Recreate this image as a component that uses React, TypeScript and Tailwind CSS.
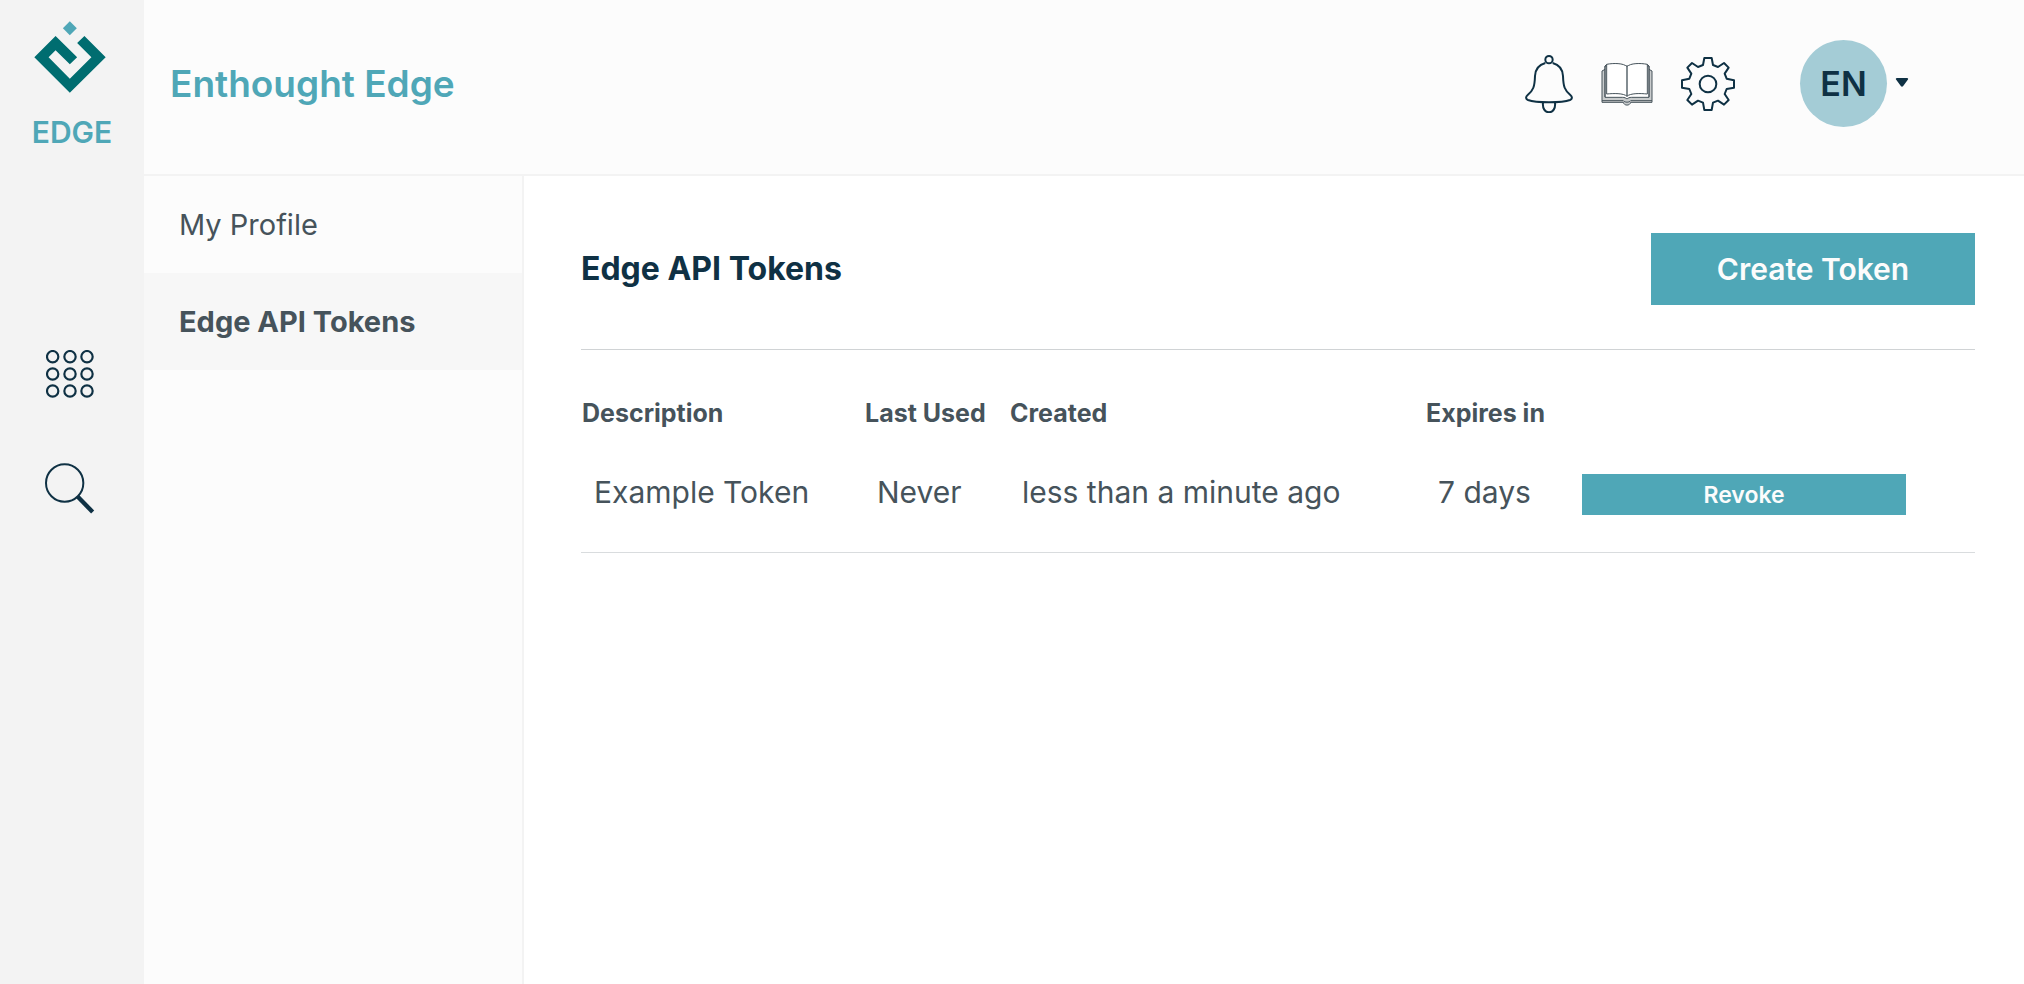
import React from "react";
import { clsx } from "clsx";

interface Token {
  id: string;
  description: string;
  lastUsed: string;
  created: string;
  expiresIn: string;
}

interface NavItem {
  label: string;
  href: string;
}

const NAV_ITEMS: NavItem[] = [
  { label: "My Profile", href: "#profile" },
  { label: "Edge API Tokens", href: "#tokens" },
];

const TOKENS: Token[] = [
  {
    id: "example",
    description: "Example Token",
    lastUsed: "Never",
    created: "less than a minute ago",
    expiresIn: "7 days",
  },
];

const EdgeLogo = () => (
  <svg viewBox="102 62 217 217" className="size-[72px]" aria-hidden="true">
    <path d="M210 63l21 21-21 21-21-21z" fill="#4fa7b7" />
    <path
      d="M167 107l65 64-22 21-43-42-21 21 64 65 65-65-43-43 22-21 64 64-108 107L103 171z"
      fill="#006d70"
    />
  </svg>
);

const AppsIcon = () => (
  <svg
    viewBox="0 0 144 144"
    className="size-12"
    fill="none"
    stroke="#0f3144"
    strokeWidth="6.5"
    aria-hidden="true"
  >
    {[20, 72, 123].map((cy) =>
      [20, 72, 123].map((cx) => (
        <circle key={`${cx}-${cy}`} cx={cx} cy={cy} r="17" />
      ))
    )}
  </svg>
);

const SearchIcon = () => (
  <svg
    viewBox="0 0 150 153"
    className="w-[50px] h-[51px]"
    fill="none"
    stroke="#0f3144"
    aria-hidden="true"
  >
    <circle cx="59" cy="60" r="56" strokeWidth="6" />
    <path d="M97 100l46 47" strokeWidth="13" />
  </svg>
);

const BellIcon = () => (
  <svg
    viewBox="72 74 144 174"
    className="w-12 h-[58px]"
    fill="none"
    stroke="#0f3144"
    strokeWidth="6"
    strokeLinejoin="round"
    aria-hidden="true"
  >
    <circle cx="144" cy="88" r="11" />
    <path d="M133 98c-18 5-30 19-31 39-1 32-5 43-22 57-7 6-6 12 1 15 13 5 36 7 63 7s50-2 63-7c7-3 8-9 1-15-17-14-21-25-22-57-1-20-13-34-31-39" />
    <path d="M126 217c-2 17 6 29 18 29s20-12 18-29" />
  </svg>
);

const BookIcon = () => (
  <svg
    viewBox="305 95 156 132"
    className="w-[52px] h-11"
    fill="none"
    stroke="#46535b"
    strokeWidth="3"
    strokeLinejoin="round"
    aria-hidden="true"
  >
    <path
      d="M317 117l-9 5v94h64c2 11 20 11 22 0h64v-94l-9-5z"
      fill="#c9cccd"
    />
    <path d="M308 211h64c4 6 18 6 22 0h64" />
    <path d="M317 107v94h52c7 0 11 2 14 5 3-3 7-5 14-5h52v-94z" fill="#fff" />
    <path
      d="M322 102c20-4 51-4 61 7 10-11 41-11 61-7v89c-20-2-51-3-61 7-10-10-41-9-61-7z"
      fill="#fff"
    />
    <path d="M383 109v89" strokeWidth="4" />
    <path d="M322 102l-5 5v93M444 102l5 5v93" />
  </svg>
);

const GearIcon = () => (
  <svg
    viewBox="543 81 162 162"
    className="size-[54px]"
    fill="none"
    stroke="#0f3144"
    strokeWidth="6"
    strokeLinejoin="round"
    aria-hidden="true"
  >
    <path d="M613 84h22l4 21 15 6 18-12 14 14-12 18 6 15 22 5v22l-22 4-6 15 12 18-14 14-18-12-15 6-4 22h-22l-4-22-15-6-18 12-14-14 12-18-6-15-22-4v-22l22-5 6-15-12-18 14-14 18 12 15-6z" />
    <circle cx="624" cy="162" r="25" />
  </svg>
);

const Sidebar = () => (
  <aside className="w-36 shrink-0 bg-[#f3f3f3] flex flex-col items-center pt-[21px] pr-1">
    <a href="#home" className="flex flex-col items-center gap-[19px]">
      <EdgeLogo />
      <span className="pl-1 text-[30px] leading-10 font-semibold text-[#4fa7b7]">
        EDGE
      </span>
    </a>
    <nav className="mt-[198px] flex flex-col items-center gap-[65px]">
      <button type="button" aria-label="Apps">
        <AppsIcon />
      </button>
      <button type="button" aria-label="Search">
        <SearchIcon />
      </button>
    </nav>
  </aside>
);

const Header = () => (
  <header className="flex items-center justify-between bg-[#fcfcfc] border-b-2 border-[#f3f3f3] pt-10 pb-[47px] pl-[26px] pr-[115px]">
    <h1 className="text-[37px] leading-10 font-semibold text-[#4fa7b7]">
      Enthought Edge
    </h1>
    <div className="flex items-center">
      <div className="flex items-center gap-7 mr-[65px]">
        <button type="button" aria-label="Notifications">
          <BellIcon />
        </button>
        <button type="button" aria-label="Documentation">
          <BookIcon />
        </button>
        <button type="button" aria-label="Settings">
          <GearIcon />
        </button>
      </div>
      <button
        type="button"
        aria-label="Account menu"
        className="flex items-center gap-2"
      >
        <span className="size-[87px] rounded-full bg-[#a4ccd6] flex items-center justify-center text-[34px] font-semibold text-[#0f3144]">
          EN
        </span>
        <svg viewBox="0 0 14 12" className="w-[14px] h-3" aria-hidden="true">
          <path
            d="M2 0h10c1.200 0 1.500 1 .8 1.700L8 8.200c-.6.600-1.400.600-2 0L1.200 1.700C.5 1 .8 0 2 0z"
            fill="#0f3144"
          />
        </svg>
      </button>
    </div>
  </header>
);

const SettingsNav = ({ active }: { active: string }) => (
  <nav className="w-[380px] shrink-0 bg-[#fcfcfc] border-r-2 border-[#f3f3f3]">
    {NAV_ITEMS.map((item) => (
      <a
        key={item.label}
        href={item.href}
        className={clsx(
          "block px-[35px] text-[29px] leading-[97px] text-[#46535b]",
          item.label === active && "bg-[#f7f7f7] font-bold"
        )}
      >
        {item.label}
      </a>
    ))}
  </nav>
);

const TokenTable = ({ tokens }: { tokens: Token[] }) => (
  <table className="w-full table-fixed text-left text-[#46535b]">
    <colgroup>
      <col className="w-[283px]" />
      <col className="w-[145px]" />
      <col className="w-[416px]" />
      <col className="w-[157px]" />
      <col />
    </colgroup>
    <thead>
      <tr className="text-[25px] leading-[38px] whitespace-nowrap">
        <th className="p-0 pl-px font-bold">Description</th>
        <th className="p-0 pl-px font-bold">Last Used</th>
        <th className="p-0 pl-px font-bold">Created</th>
        <th className="p-0 pl-px font-bold">Expires in</th>
        <td />
      </tr>
    </thead>
    <tbody>
      {tokens.map((token) => (
        <tr
          key={token.id}
          className="border-b border-[#d9dcde] align-top text-[30px] leading-9 whitespace-nowrap"
        >
          <td className="pt-[42px] pl-[13px]">{token.description}</td>
          <td className="pt-[42px] pl-[13px]">{token.lastUsed}</td>
          <td className="pt-[42px] pl-[13px]">{token.created}</td>
          <td className="pt-[42px] pl-[13px]">{token.expiresIn}</td>
          <td className="pt-[42px] pb-[37px]">
            <button
              type="button"
              className="block w-[324px] h-[41px] bg-[#4fa7b7] text-[23px] font-semibold text-[#fcfcfc]"
            >
              Revoke
            </button>
          </td>
        </tr>
      ))}
    </tbody>
  </table>
);

export default function App() {
  return (
    <div className="min-h-screen flex bg-white font-['Inter',sans-serif]">
      <Sidebar />
      <div className="flex-1 min-w-0 flex flex-col">
        <Header />
        <div className="flex-1 flex">
          <SettingsNav active="Edge API Tokens" />
          <main className="flex-1 min-w-0 pt-[57px] pl-[57px] pr-[49px]">
            <div className="flex items-center justify-between pb-11 mb-11 border-b border-[#d0d3d5]">
              <h2 className="text-[32px] font-bold text-[#0f3144]">
                Edge API Tokens
              </h2>
              <button
                type="button"
                className="w-[324px] h-[72px] bg-[#4fa7b7] text-[30px] font-semibold text-[#fcfcfc]"
              >
                Create Token
              </button>
            </div>
            <TokenTable tokens={TOKENS} />
          </main>
        </div>
      </div>
    </div>
  );
}
